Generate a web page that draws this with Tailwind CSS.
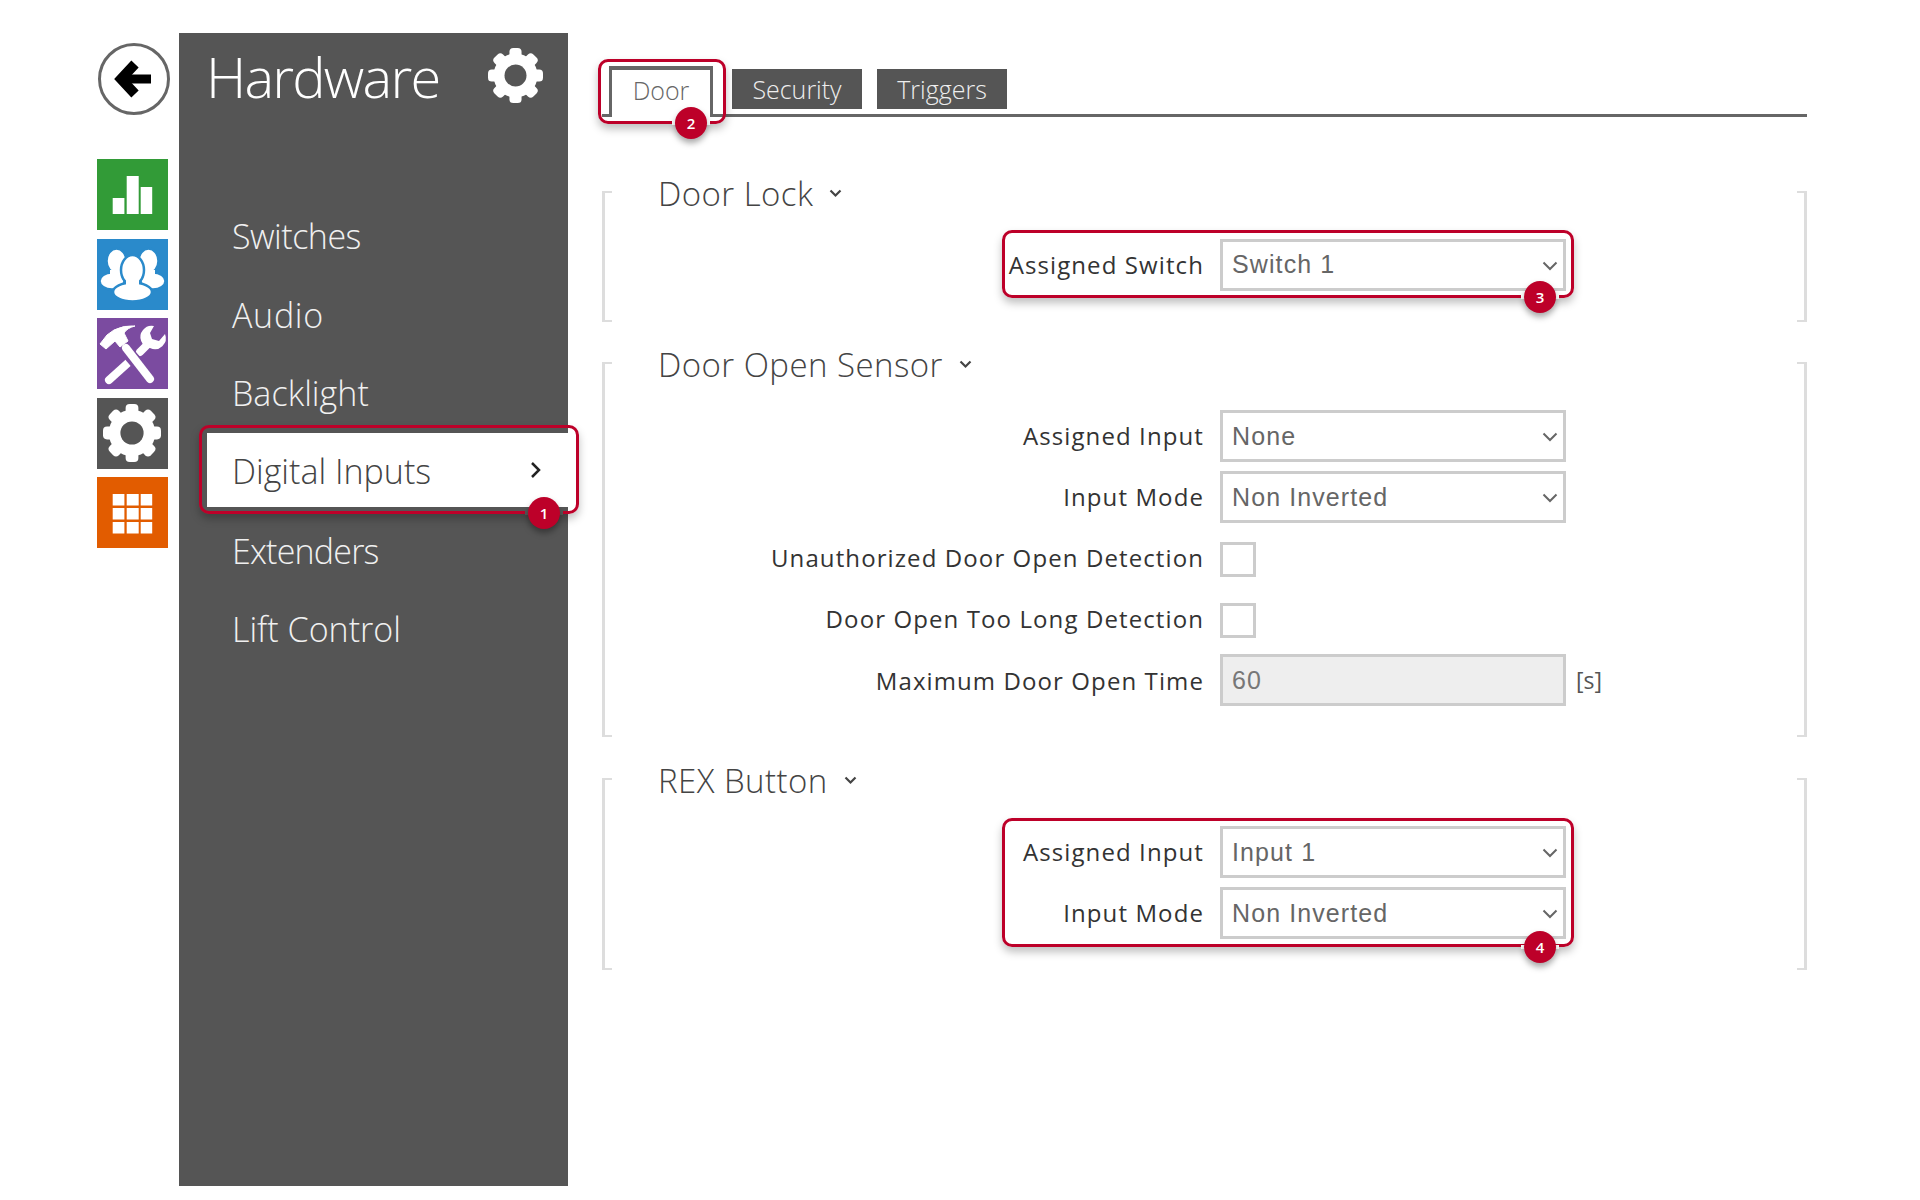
<!DOCTYPE html>
<html>
<head>
<meta charset="utf-8">
<script src="https://cdn.jsdelivr.net/npm/@tailwindcss/browser@4"></script>
</head>
<body class="bg-white font-['Open_Sans',sans-serif]">
<div class="flex pl-[97px] pt-[33px] h-[1200px] overflow-hidden">

  <!-- icon rail -->
  <div class="w-[71px] shrink-0 flex flex-col pt-[10px]">
    <div class="w-[72px] h-[72px] ml-px rounded-full border-[3px] border-[#666] flex items-center justify-center">
      <svg width="66" height="66" viewBox="4 3 66 66"><path d="M38 21 L24 36 L38 51" fill="none" stroke="#000" stroke-width="10"/><path d="M26 31.500H54V40.500H26Z" fill="#000"/></svg>
    </div>
    <div class="mt-[44px] flex flex-col gap-[8.500px]">
      <div class="w-[71px] h-[71px] bg-[#329b37]">
        <svg width="71" height="71" viewBox="0 0 71 71" fill="#fff"><rect x="15.700" y="39" width="11.700" height="16"/><rect x="29.700" y="17" width="12" height="38"/><rect x="43.700" y="28" width="11.500" height="27"/></svg>
      </div>
      <div class="w-[71px] h-[71px] bg-[#2a8acb]">
        <svg width="71" height="71" viewBox="0 0 71 71" fill="#fff">
          <g stroke="#2a8acb" stroke-width="2.500">
            <ellipse cx="19.500" cy="22" rx="10" ry="12.500"/>
            <ellipse cx="51.500" cy="22" rx="10" ry="12.500"/>
            <ellipse cx="15" cy="42" rx="12.500" ry="8.500"/>
            <ellipse cx="56" cy="42" rx="12.500" ry="8.500"/>
            <path d="M13 31h11v10H13zM47 31h11v10H47z" stroke="none"/>
            <ellipse cx="35.500" cy="53" rx="19.500" ry="9.500"/>
            <ellipse cx="35.500" cy="31" rx="11.500" ry="15"/>
            <path d="M29 40h13v10H29z" stroke="none"/>
          </g>
        </svg>
      </div>
      <div class="w-[71px] h-[71px] bg-[#7b4ba0]">
        <svg width="71" height="71" viewBox="0 0 71 71">
          <path d="M12 62 L32 44" stroke="#fff" stroke-width="8" stroke-linecap="round"/>
          <path d="M43 34 L52 25" stroke="#fff" stroke-width="8" stroke-linecap="round"/>
          <path d="M46 12 A11 11 0 0 0 53 30 A11 11 0 0 0 68 16 L62 23 L55 21 L53 15 L57 8 A11 11 0 0 0 46 12Z" fill="#fff"/>
          <path d="M27 30 L55 63" stroke="#7b4ba0" stroke-width="13"/>
          <path d="M29 30 L53 61" stroke="#fff" stroke-width="8" stroke-linecap="round"/>
          <path d="M3 26 L10 17 L17 12 Q27 7 38 8 Q30 10 27 15 L31 23 L23 29 L18 23 L9 31Z" fill="#fff" stroke="#fff" stroke-linejoin="round"/>
        </svg>
      </div>
      <div class="w-[71px] h-[71px] bg-[#555] flex items-center justify-center">
        <svg class="-ml-[1px]" width="58" height="58" viewBox="-50 -50 100 100" fill="#fff">
          <circle r="40"/>
          <rect x="-11" y="-50" width="22" height="22" rx="7"/>
          <rect x="-11" y="-50" width="22" height="22" rx="7" transform="rotate(45)"/>
          <rect x="-11" y="-50" width="22" height="22" rx="7" transform="rotate(90)"/>
          <rect x="-11" y="-50" width="22" height="22" rx="7" transform="rotate(135)"/>
          <rect x="-11" y="-50" width="22" height="22" rx="7" transform="rotate(180)"/>
          <rect x="-11" y="-50" width="22" height="22" rx="7" transform="rotate(225)"/>
          <rect x="-11" y="-50" width="22" height="22" rx="7" transform="rotate(270)"/>
          <rect x="-11" y="-50" width="22" height="22" rx="7" transform="rotate(315)"/>
          <circle r="20" fill="#555"/>
        </svg>
      </div>
      <div class="w-[71px] h-[71px] bg-[#e25c00]">
        <svg width="71" height="71" viewBox="0 0 71 71" fill="#fff">
          <rect x="15.700" y="17" width="11.700" height="11.500"/><rect x="29.700" y="17" width="12" height="11.500"/><rect x="43.700" y="17" width="11.500" height="11.500"/>
          <rect x="15.700" y="31" width="11.700" height="11.500"/><rect x="29.700" y="31" width="12" height="11.500"/><rect x="43.700" y="31" width="11.500" height="11.500"/>
          <rect x="15.700" y="45" width="11.700" height="11.500"/><rect x="29.700" y="45" width="12" height="11.500"/><rect x="43.700" y="45" width="11.500" height="11.500"/>
        </svg>
      </div>
    </div>
  </div>

  <!-- sidebar -->
  <aside class="ml-[11px] w-[389px] h-[1153px] shrink-0 bg-[#555]">
    <div class="h-[164px] pt-[15px] pl-[27px] pr-[25px] flex justify-between items-start">
      <div class="text-[56px] leading-[56px] font-light text-white tracking-[-1.800px]">Hardware</div>
      <svg width="55" height="55" viewBox="-50 -50 100 100" fill="#fff">
        <circle r="40"/>
        <rect x="-11" y="-50" width="22" height="22" rx="7"/>
        <rect x="-11" y="-50" width="22" height="22" rx="7" transform="rotate(45)"/>
        <rect x="-11" y="-50" width="22" height="22" rx="7" transform="rotate(90)"/>
        <rect x="-11" y="-50" width="22" height="22" rx="7" transform="rotate(135)"/>
        <rect x="-11" y="-50" width="22" height="22" rx="7" transform="rotate(180)"/>
        <rect x="-11" y="-50" width="22" height="22" rx="7" transform="rotate(225)"/>
        <rect x="-11" y="-50" width="22" height="22" rx="7" transform="rotate(270)"/>
        <rect x="-11" y="-50" width="22" height="22" rx="7" transform="rotate(315)"/>
        <circle r="20" fill="#555"/>
      </svg>
    </div>
    <nav class="flex flex-col gap-[4.700px] pl-[28px] text-[34px] font-light text-[#f0f0f0]">
      <div class="h-[74px] pl-[25px] pt-[5px] flex items-center tracking-[-0.500px]">Switches</div>
      <div class="h-[74px] pl-[25px] pt-[6px] flex items-center tracking-[0.700px]">Audio</div>
      <div class="h-[74px] pl-[25px] pt-[5px] flex items-center tracking-[0.050px]">Backlight</div>
      <div class="relative h-[74px] pl-[25px] pr-[26px] flex items-center justify-between bg-white text-[#444]">
        <span class="pt-[3px]">Digital Inputs</span>
        <svg width="12" height="18" viewBox="0 0 12 18"><path d="M2 2 L9 9 L2 16" fill="none" stroke="#222" stroke-width="2.500"/></svg>
        <div class="absolute left-[-8px] right-[-11px] top-[-8px] bottom-[-7px] rounded-[10px] border-[3px] border-[#bd0029] shadow-[0_5px_8px_rgba(0,0,0,0.25)]"></div>
        <span class="absolute right-[5px] bottom-[-8px] w-[38px] h-[4px] bg-[#555]"></span>
        <span class="absolute right-[8px] bottom-[-22px] w-8 h-8 rounded-full bg-[#bd0029] text-white text-[15px] font-semibold tracking-normal flex items-center justify-center shadow-[0_4px_6px_rgba(0,0,0,0.35)]">1</span>
      </div>
      <div class="h-[74px] pl-[25px] pt-[5px] flex items-center tracking-[-0.800px]">Extenders</div>
      <div class="h-[74px] pl-[25px] pt-[4px] flex items-center">Lift Control</div>
    </nav>
  </aside>

  <!-- main -->
  <main class="ml-[34px] w-[1205px] shrink-0 pt-[33px]">
    <div class="h-[51px] flex items-start border-b-[3px] border-[#666] text-[25px]">
      <div class="relative ml-[7px] w-[104px] h-[51px] bg-white border-x-[3px] border-t-[4px] border-[#666] flex items-center justify-center text-[#666] font-light pb-[6px]">
        Door
        <div class="absolute left-[-14px] right-[-16px] top-[-11px] bottom-[-7px] rounded-[10px] border-[3px] border-[#bd0029] shadow-[0_5px_8px_rgba(0,0,0,0.25)]"></div>
        <span class="absolute right-[0px] bottom-[-8px] w-[38px] h-[4px] bg-white"></span>
        <span class="absolute right-[3px] bottom-[-22px] w-8 h-8 rounded-full bg-[#bd0029] text-white text-[15px] font-semibold flex items-center justify-center shadow-[0_4px_6px_rgba(0,0,0,0.35)]">2</span>
      </div>
      <div class="ml-[19px] mt-[3px] w-[130px] h-[40px] pt-[1px] bg-[#555] text-[#eee] font-light flex items-center justify-center">Security</div>
      <div class="ml-[15px] mt-[3px] w-[130px] h-[40px] pt-[1px] bg-[#555] text-[#eee] font-light flex items-center justify-center">Triggers</div>
    </div>

    <section class="mt-[74px] flex h-[131px]">
      <div class="w-[10px] border-l-[3px] border-y-[2px] border-[#ddd]"></div>
      <div class="flex-1">
        <h2 class="ml-[46px] -mt-[14px] mb-[29px] h-[33px] flex items-center gap-[16px] text-[33px] leading-[33px] font-light text-[#444] tracking-[0.450px]">Door Lock
          <svg width="13" height="9" viewBox="0 0 13 9"><path d="M1.500 1.500 L6.500 6.500 L11.500 1.500" fill="none" stroke="#444" stroke-width="2.200"/></svg>
        </h2>
        <div class="relative flex items-center gap-[16px] h-[52px] text-[#333] text-[24px] tracking-[1.100px]">
          <div class="w-[592px] text-right">Assigned Switch</div>
          <div class="relative w-[346px] h-[52px] border-[3px] border-[#ccc] bg-white flex items-center pl-[9px] pb-[1px] text-[#666] text-[25px] tracking-[1.100px] font-['Liberation_Sans',sans-serif]">Switch 1
            <svg class="absolute right-[5px] top-[19px]" width="16" height="10" viewBox="0 0 16 10"><path d="M1.500 1.500 L8 8 L14.500 1.500" fill="none" stroke="#666" stroke-width="2"/></svg>
          </div>
          <div class="absolute left-[390px] w-[572px] top-[-9px] bottom-[-7px] rounded-[10px] border-[3px] border-[#bd0029] shadow-[0_5px_8px_rgba(0,0,0,0.25)]"></div>
          <span class="absolute left-[909px] bottom-[-8px] w-[38px] h-[4px] bg-white"></span>
          <span class="absolute left-[912px] bottom-[-22px] w-8 h-8 rounded-full bg-[#bd0029] text-white text-[15px] tracking-normal font-semibold flex items-center justify-center shadow-[0_4px_6px_rgba(0,0,0,0.35)]">3</span>
        </div>
      </div>
      <div class="w-[10px] border-r-[3px] border-y-[2px] border-[#ddd]"></div>
    </section>

    <section class="mt-[40px] flex h-[375px]">
      <div class="w-[10px] border-l-[3px] border-y-[2px] border-[#ddd]"></div>
      <div class="flex-1">
        <h2 class="ml-[46px] -mt-[14px] mb-[29px] h-[33px] flex items-center gap-[16px] text-[33px] leading-[33px] font-light text-[#444] tracking-[0.450px]">Door Open Sensor
          <svg width="13" height="9" viewBox="0 0 13 9"><path d="M1.500 1.500 L6.500 6.500 L11.500 1.500" fill="none" stroke="#444" stroke-width="2.200"/></svg>
        </h2>
        <div class="flex flex-col gap-[9px] text-[#333] text-[24px] tracking-[1.100px]">
          <div class="flex items-center gap-[16px] h-[52px]">
            <div class="w-[592px] text-right">Assigned Input</div>
            <div class="relative w-[346px] h-[52px] border-[3px] border-[#ccc] bg-white flex items-center pl-[9px] pt-[1px] text-[#666] text-[25px] tracking-[1.100px] font-['Liberation_Sans',sans-serif]">None
              <svg class="absolute right-[5px] top-[19px]" width="16" height="10" viewBox="0 0 16 10"><path d="M1.500 1.500 L8 8 L14.500 1.500" fill="none" stroke="#666" stroke-width="2"/></svg>
            </div>
          </div>
          <div class="flex items-center gap-[16px] h-[52px]">
            <div class="w-[592px] text-right">Input Mode</div>
            <div class="relative w-[346px] h-[52px] border-[3px] border-[#ccc] bg-white flex items-center pl-[9px] pt-[1px] text-[#666] text-[25px] tracking-[1.100px] font-['Liberation_Sans',sans-serif]">Non Inverted
              <svg class="absolute right-[5px] top-[19px]" width="16" height="10" viewBox="0 0 16 10"><path d="M1.500 1.500 L8 8 L14.500 1.500" fill="none" stroke="#666" stroke-width="2"/></svg>
            </div>
          </div>
          <div class="flex items-center gap-[16px] h-[52px]">
            <div class="w-[592px] text-right">Unauthorized Door Open Detection</div>
            <div class="mt-[3px] w-[36px] h-[35px] border-[3px] border-[#ccc] bg-white"></div>
          </div>
          <div class="flex items-center gap-[16px] h-[52px]">
            <div class="w-[592px] text-right">Door Open Too Long Detection</div>
            <div class="mt-[3px] w-[36px] h-[35px] border-[3px] border-[#ccc] bg-white"></div>
          </div>
          <div class="flex items-center gap-[16px] h-[52px]">
            <div class="w-[592px] text-right pt-[1px]">Maximum Door Open Time</div>
            <div class="w-[346px] h-[52px] border-[3px] border-[#ccc] bg-[#eee] flex items-center pl-[9px] pt-[1px] text-[#777] text-[25px] tracking-[1.100px] font-['Liberation_Sans',sans-serif]">60</div>
            <div class="-ml-[6px] text-[#555] text-[23px] tracking-normal">[s]</div>
          </div>
        </div>
      </div>
      <div class="w-[10px] border-r-[3px] border-y-[2px] border-[#ddd]"></div>
    </section>

    <section class="mt-[41px] flex h-[192px]">
      <div class="w-[10px] border-l-[3px] border-y-[2px] border-[#ddd]"></div>
      <div class="flex-1">
        <h2 class="ml-[46px] -mt-[14px] mb-[29px] h-[33px] flex items-center gap-[16px] text-[33px] leading-[33px] font-light text-[#444] tracking-[0.450px]">REX Button
          <svg width="13" height="9" viewBox="0 0 13 9"><path d="M1.500 1.500 L6.500 6.500 L11.500 1.500" fill="none" stroke="#444" stroke-width="2.200"/></svg>
        </h2>
        <div class="relative flex flex-col gap-[9px] text-[#333] text-[24px] tracking-[1.100px]">
          <div class="flex items-center gap-[16px] h-[52px]">
            <div class="w-[592px] text-right">Assigned Input</div>
            <div class="relative w-[346px] h-[52px] border-[3px] border-[#ccc] bg-white flex items-center pl-[9px] pt-[1px] text-[#666] text-[25px] tracking-[1.100px] font-['Liberation_Sans',sans-serif]">Input 1
              <svg class="absolute right-[5px] top-[19px]" width="16" height="10" viewBox="0 0 16 10"><path d="M1.500 1.500 L8 8 L14.500 1.500" fill="none" stroke="#666" stroke-width="2"/></svg>
            </div>
          </div>
          <div class="flex items-center gap-[16px] h-[52px]">
            <div class="w-[592px] text-right">Input Mode</div>
            <div class="relative w-[346px] h-[52px] border-[3px] border-[#ccc] bg-white flex items-center pl-[9px] pt-[1px] text-[#666] text-[25px] tracking-[1.100px] font-['Liberation_Sans',sans-serif]">Non Inverted
              <svg class="absolute right-[5px] top-[19px]" width="16" height="10" viewBox="0 0 16 10"><path d="M1.500 1.500 L8 8 L14.500 1.500" fill="none" stroke="#666" stroke-width="2"/></svg>
            </div>
          </div>
          <div class="absolute left-[390px] w-[572px] top-[-8px] bottom-[-8px] rounded-[10px] border-[3px] border-[#bd0029] shadow-[0_5px_8px_rgba(0,0,0,0.25)]"></div>
          <span class="absolute left-[909px] bottom-[-10px] w-[38px] h-[4px] bg-white"></span>
          <span class="absolute left-[912px] bottom-[-24px] w-8 h-8 rounded-full bg-[#bd0029] text-white text-[15px] tracking-normal font-semibold flex items-center justify-center shadow-[0_4px_6px_rgba(0,0,0,0.35)]">4</span>
        </div>
      </div>
      <div class="w-[10px] border-r-[3px] border-y-[2px] border-[#ddd]"></div>
    </section>
  </main>
</div>
</body>
</html>
